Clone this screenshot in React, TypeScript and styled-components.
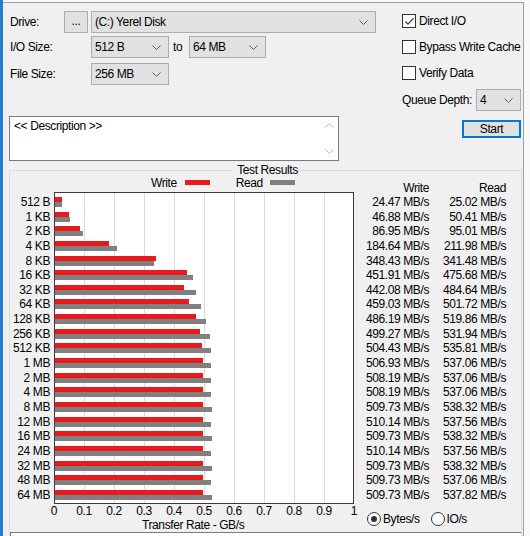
import React from "react";
import styled, { createGlobalStyle } from "styled-components";

type Result = { size: string; write: number; read: number };

const RESULTS: Result[] = [
  { size: "512 B", write: 24.47, read: 25.02 },
  { size: "1 KB", write: 46.88, read: 50.41 },
  { size: "2 KB", write: 86.95, read: 95.01 },
  { size: "4 KB", write: 184.64, read: 211.98 },
  { size: "8 KB", write: 348.43, read: 341.48 },
  { size: "16 KB", write: 451.91, read: 475.68 },
  { size: "32 KB", write: 442.08, read: 484.64 },
  { size: "64 KB", write: 459.03, read: 501.72 },
  { size: "128 KB", write: 486.19, read: 519.86 },
  { size: "256 KB", write: 499.27, read: 531.94 },
  { size: "512 KB", write: 504.43, read: 535.81 },
  { size: "1 MB", write: 506.93, read: 537.06 },
  { size: "2 MB", write: 508.19, read: 537.06 },
  { size: "4 MB", write: 508.19, read: 537.06 },
  { size: "8 MB", write: 509.73, read: 538.32 },
  { size: "12 MB", write: 510.14, read: 537.56 },
  { size: "16 MB", write: 509.73, read: 538.32 },
  { size: "24 MB", write: 510.14, read: 537.56 },
  { size: "32 MB", write: 509.73, read: 538.32 },
  { size: "48 MB", write: 509.73, read: 537.06 },
  { size: "64 MB", write: 509.73, read: 537.82 },
];

const TICKS = ["0", "0.1", "0.2", "0.3", "0.4", "0.5", "0.6", "0.7", "0.8", "0.9", "1"];

// plot inner width covers 0..1 GB/s
const PX_PER_MB = 298 / 1024;
const ROW = 14.65;

const WRITE_RED = "#e81a1c";
const READ_GRAY = "#808080";

const GlobalStyle = createGlobalStyle`
  html, body {
    margin: 0;
    padding: 0;
    overflow: hidden;
    background: #f9f9f9;
  }
  body {
    font-family: "Liberation Sans", Arial, sans-serif;
    font-size: 12px;
    letter-spacing: -0.4px;
    color: #000;
  }
`;

const Window = styled.div`
  width: 530px;
  height: 536px;
  display: flex;
  overflow: hidden;
  background: #f9f9f9;
`;

const Accent = styled.div`
  flex: none;
  width: 3px;
  background: #2b7acb;
`;

const Panel = styled.div`
  flex: none;
  box-sizing: border-box;
  width: 521px;
  margin-top: 2px;
  padding: 8px 1px 0 6px;
  background: #f0f0f0;
  border-top: 1px solid #a0a0a0;
  border-right: 1px solid #a0a0a0;
`;

const Top = styled.div`
  display: flex;
`;

const LeftCol = styled.div`
  flex: 0 0 393px;
  display: flex;
  flex-direction: column;
`;

const FieldRow = styled.div<{ $gap?: number }>`
  display: flex;
  align-items: center;
  height: 22px;
  margin-top: ${(p) => p.$gap ?? 0}px;
`;

const Label = styled.span<{ $width: number }>`
  flex: none;
  width: ${(p) => p.$width}px;
  padding-left: 1px;
  box-sizing: border-box;
  white-space: nowrap;
`;

const DotsButton = styled.div`
  box-sizing: border-box;
  width: 24px;
  height: 22px;
  margin-right: 3px;
  border: 1px solid #adadad;
  background: #e1e1e1;
  display: flex;
  align-items: center;
  justify-content: center;
  padding-bottom: 2px;
`;

const ComboBox = styled.div<{ $width: number }>`
  flex: none;
  box-sizing: border-box;
  width: ${(p) => p.$width}px;
  height: 22px;
  padding: 0 7px 0 3px;
  border: 1px solid #adadad;
  background: #e1e1e1;
  display: flex;
  align-items: center;
  justify-content: space-between;
  white-space: nowrap;
`;

const ToText = styled.span`
  flex: none;
  width: 20px;
  padding-left: 4px;
  box-sizing: border-box;
`;

const Description = styled.div`
  box-sizing: border-box;
  width: 330px;
  height: 45px;
  margin-top: 31px;
  border: 1px solid #7a7a7a;
  background: #fff;
  display: flex;
`;

const DescText = styled.div`
  flex: 1;
  padding: 3px 4px;
  line-height: 13px;
`;

const ScrollBar = styled.div`
  flex: none;
  width: 17px;
  display: flex;
  flex-direction: column;
  justify-content: space-between;
  align-items: center;
  padding: 6px 0 6px;
`;

const RightCol = styled.div`
  flex: 1;
  display: flex;
  flex-direction: column;
`;

const CheckRow = styled.label<{ $gap?: number }>`
  display: flex;
  align-items: center;
  height: 20px;
  margin-top: ${(p) => p.$gap ?? 0}px;
`;

const CheckBox = styled.span`
  flex: none;
  box-sizing: border-box;
  width: 14px;
  height: 14px;
  margin-right: 3px;
  border: 1px solid #333;
  background: #fff;
  display: flex;
  align-items: center;
  justify-content: center;
`;

const QueueRow = styled.div`
  display: flex;
  align-items: center;
  justify-content: space-between;
  height: 22px;
  margin-top: 6px;
  padding-right: 1px;
`;

const StartButton = styled.div`
  align-self: flex-end;
  box-sizing: border-box;
  width: 59px;
  height: 18px;
  margin-top: 9px;
  margin-right: 1px;
  border: 2px solid #0078d7;
  background: #e1e1e1;
  display: flex;
  align-items: center;
  justify-content: center;
`;

const Group = styled.fieldset`
  margin: 2px 0 0 0;
  padding: 0;
  min-width: 0;
  border: 1px solid #dcdcdc;
`;

const Caption = styled.legend`
  margin: 0 auto;
  padding: 0 2px;
  line-height: 14px;
  position: relative;
  left: 2px;
`;

const ChartBody = styled.div`
  display: flex;
  align-items: flex-start;
`;

const ChartLeft = styled.div`
  flex: 0 0 344px;
  min-width: 0;
  display: flex;
  flex-direction: column;
`;

const LegendRow = styled.div`
  display: flex;
  align-items: flex-start;
  height: 15px;
  padding-left: 141px;
  line-height: 13px;
`;

const Swatch = styled.span<{ $color: string; $gap: number }>`
  flex: none;
  width: 25px;
  height: 5px;
  margin-top: 3px;
  margin-left: ${(p) => p.$gap}px;
  background: ${(p) => p.$color};
`;

const LegendText = styled.span<{ $gap?: number }>`
  margin-left: ${(p) => p.$gap ?? 0}px;
`;

const PlotRow = styled.div`
  display: flex;
`;

const SizeLabels = styled.div`
  flex: none;
  width: 40px;
  margin-right: 4px;
  padding-top: 3px;
  text-align: right;
`;

const RowText = styled.div`
  height: ${ROW}px;
  line-height: ${ROW}px;
  white-space: nowrap;
`;

const Plot = styled.div`
  flex: none;
  box-sizing: border-box;
  width: 300px;
  height: 312px;
  padding-top: 2px;
  border: 1px solid #3c3c3c;
  background-color: #fff;
  background-image: repeating-linear-gradient(
    to right,
    transparent 0 29px,
    #dadada 29px 30px
  );
`;

const BarRow = styled.div`
  height: ${ROW}px;
  padding-top: 2px;
  box-sizing: border-box;
`;

const Bar = styled.div<{ $color: string; $h: number }>`
  height: ${(p) => p.$h}px;
  background: ${(p) => p.$color};
`;

const AxisRow = styled.div`
  display: flex;
  margin-left: 29px;
  height: 15px;
  line-height: 15px;
`;

const Tick = styled.span`
  flex: none;
  width: 30px;
  text-align: center;
`;

const AxisTitle = styled.div`
  padding-left: 132px;
  height: 12px;
  line-height: 12px;
  white-space: nowrap;
`;

const Values = styled.div`
  flex: 1;
  display: flex;
  flex-direction: column;
`;

const ValueGrid = styled.div`
  display: grid;
  grid-template-columns: 75px 77px;
  margin-top: 4px;
  text-align: right;
`;

const HeaderCell = styled.div`
  height: 14px;
  line-height: 14px;
`;

const RadioRow = styled.div`
  display: flex;
  align-items: center;
  height: 14px;
  margin-top: 10px;
  padding-left: 13px;
`;

const Radio = styled.span<{ $gap?: number }>`
  flex: none;
  box-sizing: border-box;
  width: 14px;
  height: 14px;
  margin-left: ${(p) => p.$gap ?? 0}px;
  margin-right: 2px;
  border: 1px solid #333;
  border-radius: 50%;
  background: #fff;
  display: flex;
  align-items: center;
  justify-content: center;
`;

const RadioDot = styled.span`
  width: 6px;
  height: 6px;
  border-radius: 50%;
  background: #333;
`;

const BottomBox = styled.div`
  height: 20px;
  margin-top: 1px;
  border-top: 1px solid #7a7a7a;
  border-left: 1px solid #7a7a7a;
  background: #fff;
`;

function Chevron({ up = false, color = "#606060" }: { up?: boolean; color?: string }) {
  return (
    <svg width="9" height="5" viewBox="0 0 9 5" style={{ flex: "none" }}>
      <polyline
        points={up ? "0.5,4.5 4.5,0.5 8.5,4.5" : "0.5,0.5 4.5,4.5 8.5,0.5"}
        fill="none"
        stroke={color}
        strokeWidth="1"
      />
    </svg>
  );
}

function Combo({ width, value }: { width: number; value: string }) {
  return (
    <ComboBox $width={width}>
      <span>{value}</span>
      <Chevron />
    </ComboBox>
  );
}

function Check({ label, checked, gap }: { label: string; checked?: boolean; gap?: number }) {
  return (
    <CheckRow $gap={gap}>
      <CheckBox>
        {checked && (
          <svg width="11" height="11" viewBox="0 0 11 11">
            <polyline points="1.5,5.5 4,8.2 9.5,2.2" fill="none" stroke="#333" strokeWidth="1.2" />
          </svg>
        )}
      </CheckBox>
      {label}
    </CheckRow>
  );
}

export default function App() {
  return (
    <>
      <GlobalStyle />
      <Window>
        <Accent />
        <Panel>
          <Top>
            <LeftCol>
              <FieldRow>
                <Label $width={55}>Drive:</Label>
                <DotsButton>...</DotsButton>
                <Combo width={285} value="(C:) Yerel Disk" />
              </FieldRow>
              <FieldRow $gap={3}>
                <Label $width={82}>I/O Size:</Label>
                <Combo width={78} value="512 B" />
                <ToText>to</ToText>
                <Combo width={77} value="64 MB" />
              </FieldRow>
              <FieldRow $gap={5}>
                <Label $width={82}>File Size:</Label>
                <Combo width={78} value="256 MB" />
              </FieldRow>
              <Description>
                <DescText>&lt;&lt; Description &gt;&gt;</DescText>
                <ScrollBar>
                  <Chevron up color="#bcbcbc" />
                  <Chevron color="#bcbcbc" />
                </ScrollBar>
              </Description>
            </LeftCol>
            <RightCol>
              <Check label="Direct I/O" checked />
              <Check label="Bypass Write Cache" gap={6} />
              <Check label="Verify Data" gap={6} />
              <QueueRow>
                <span>Queue Depth:</span>
                <Combo width={45} value="4" />
              </QueueRow>
              <StartButton>Start</StartButton>
            </RightCol>
          </Top>

          <Group>
            <Caption>Test Results</Caption>
            <ChartBody>
              <ChartLeft>
                <LegendRow>
                  <LegendText>Write</LegendText>
                  <Swatch $color={WRITE_RED} $gap={8} />
                  <LegendText $gap={26}>Read</LegendText>
                  <Swatch $color={READ_GRAY} $gap={7} />
                </LegendRow>
                <PlotRow>
                  <SizeLabels>
                    {RESULTS.map((r) => (
                      <RowText key={r.size}>{r.size}</RowText>
                    ))}
                  </SizeLabels>
                  <Plot>
                    {RESULTS.map((r) => (
                      <BarRow key={r.size}>
                        <Bar $color={WRITE_RED} $h={5} style={{ width: r.write * PX_PER_MB }} />
                        <Bar $color={READ_GRAY} $h={5} style={{ width: r.read * PX_PER_MB }} />
                      </BarRow>
                    ))}
                  </Plot>
                </PlotRow>
                <AxisRow>
                  {TICKS.map((t) => (
                    <Tick key={t}>{t}</Tick>
                  ))}
                </AxisRow>
                <AxisTitle>Transfer Rate - GB/s</AxisTitle>
              </ChartLeft>
              <Values>
                <ValueGrid>
                  <HeaderCell>Write</HeaderCell>
                  <HeaderCell>Read</HeaderCell>
                  {RESULTS.map((r) => (
                    <React.Fragment key={r.size}>
                      <RowText>{r.write.toFixed(2)} MB/s</RowText>
                      <RowText>{r.read.toFixed(2)} MB/s</RowText>
                    </React.Fragment>
                  ))}
                </ValueGrid>
                <RadioRow>
                  <Radio>
                    <RadioDot />
                  </Radio>
                  <span>Bytes/s</span>
                  <Radio $gap={11} />
                  <span>IO/s</span>
                </RadioRow>
              </Values>
            </ChartBody>
            <BottomBox />
          </Group>
        </Panel>
      </Window>
    </>
  );
}
